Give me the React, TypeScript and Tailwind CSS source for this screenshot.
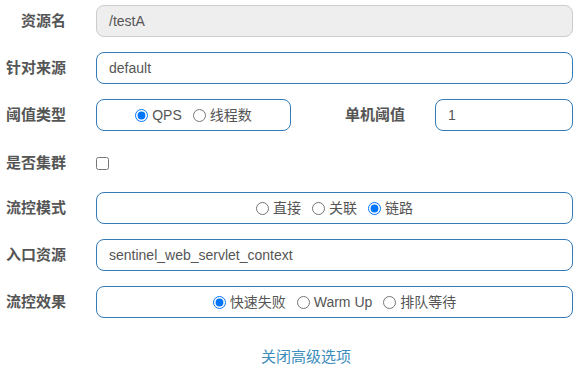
import React from "react";

const font = { fontFamily: '"Liberation Sans", Arial, "Noto Sans CJK SC", sans-serif' };

function Label({ children, className = "" }: { children: React.ReactNode; className?: string }) {
  return (
    <div className={`w-[66px] shrink-0 text-right text-[15px] font-bold text-[#555] ${className}`}>
      {children}
    </div>
  );
}

function Radio({ label, checked }: { label: string; checked?: boolean }) {
  return (
    <label className="flex items-center gap-[4px] text-[14px] text-[#555]">
      <input type="radio" defaultChecked={checked} className="m-0 h-[13px] w-[13px]" />
      <span>{label}</span>
    </label>
  );
}

function RadioBox({ items, checked, className = "" }: { items: string[]; checked: number; className?: string }) {
  return (
    <div
      className={`flex h-[32px] items-center justify-center gap-[11px] rounded-[8px] border border-[#337ab7] bg-white ${className}`}
    >
      {items.map((it, i) => (
        <Radio key={it} label={it} checked={i === checked} />
      ))}
    </div>
  );
}

function TextBox({ value, disabled }: { value: string; disabled?: boolean }) {
  return (
    <div
      className={`flex h-[32px] flex-1 items-center rounded-[8px] border px-[12px] text-[14px] text-[#555] ${
        disabled ? "border-[#ccc] bg-[#eee]" : "border-[#337ab7] bg-white"
      }`}
    >
      {value}
    </div>
  );
}

export default function App() {
  return (
    <div className="h-[367px] w-[579px] bg-white pr-[6px] pt-[5px]" style={font}>
      <div className="flex items-center">
        <Label>资源名</Label>
        <div className="ml-[30px] flex flex-1">
          <TextBox value="/testA" disabled />
        </div>
      </div>

      <div className="mt-[15px] flex items-center">
        <Label>针对来源</Label>
        <div className="ml-[30px] flex flex-1">
          <TextBox value="default" />
        </div>
      </div>

      <div className="mt-[15px] flex items-center">
        <Label>阈值类型</Label>
        <RadioBox className="ml-[30px] w-[195px]" items={["QPS", "线程数"]} checked={0} />
        <div className="w-[114px] shrink-0 text-right text-[15px] font-bold text-[#555]">单机阈值</div>
        <div className="ml-[30px] flex flex-1">
          <TextBox value="1" />
        </div>
      </div>

      <div className="mt-[17px] flex h-[31px] items-center">
        <Label>是否集群</Label>
        <input type="checkbox" className="m-0 ml-[30px] h-[13px] w-[13px]" />
      </div>

      <div className="mt-[13px] flex items-center">
        <Label>流控模式</Label>
        <RadioBox className="ml-[30px] flex-1" items={["直接", "关联", "链路"]} checked={2} />
      </div>

      <div className="mt-[15px] flex items-center">
        <Label>入口资源</Label>
        <div className="ml-[30px] flex flex-1">
          <TextBox value="sentinel_web_servlet_context" />
        </div>
      </div>

      <div className="mt-[15px] flex items-center">
        <Label>流控效果</Label>
        <RadioBox className="ml-[30px] flex-1" items={["快速失败", "Warm Up", "排队等待"]} checked={0} />
      </div>

      <div className="mt-[29px] flex justify-center pl-[39px]">
        <span className="text-[15px] leading-[20px] text-[#3c8dbc]">关闭高级选项</span>
      </div>
    </div>
  );
}
